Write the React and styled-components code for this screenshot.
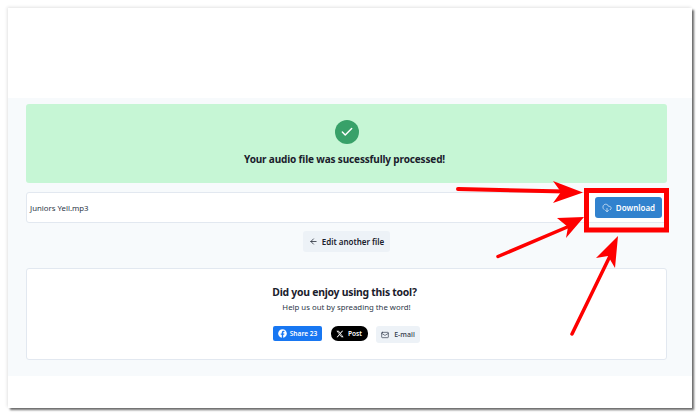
import React from 'react'
import styled, {createGlobalStyle} from 'styled-components'
import {ArrowLeft, CloudDownload, Mail, Check} from 'lucide-react'
import {FaFacebook} from 'react-icons/fa'
import {FaXTwitter} from 'react-icons/fa6'

const Global = createGlobalStyle`
  html, body {
    margin: 0;
    padding: 0;
    background: #fff;
  }
  body {
    font-family: "Noto Sans", "Liberation Sans", sans-serif;
    color: #1a202c;
    overflow: hidden;
  }
`

const Page = styled.div`
  position: relative;
  width: 700px;
  height: 418px;
  padding: 8px;
  box-sizing: border-box;
`

const Frame = styled.div`
  height: 400px;
  padding-top: 90px;
  box-sizing: border-box;
  background: #fff;
  box-shadow: 2px 2px 2px #6b6b6b, -1px -1px 3px #e4e4e4;
`

const Section = styled.section`
  height: 278px;
  box-sizing: border-box;
  padding: 6px 25px 0 18px;
  background: #f7fafc;
  display: flex;
  flex-direction: column;
`

const Banner = styled.div`
  height: 79px;
  box-sizing: border-box;
  padding-top: 16px;
  background: #c6f6d5;
  border-radius: 3px;
  display: flex;
  flex-direction: column;
  align-items: center;
`

const CheckCircle = styled.div`
  width: 24px;
  height: 24px;
  border-radius: 50%;
  background: #38a169;
  color: #fff;
  display: flex;
  align-items: center;
  justify-content: center;
`

const BannerText = styled.div`
  margin: 8px 4px 0 0;
  font-size: 10px;
  line-height: 14px;
  font-weight: 700;
  letter-spacing: -0.15px;
`

const FileRow = styled.div`
  margin-top: 9px;
  height: 31px;
  box-sizing: border-box;
  padding: 0 4px 0 3px;
  background: #fff;
  border: 1px solid #e2e8f0;
  border-radius: 3px;
  display: flex;
  align-items: center;
  justify-content: space-between;
`

const FileName = styled.span`
  font-size: 7.8px;
  color: #2d3748;
`

const DownloadButton = styled.button`
  width: 67px;
  height: 21px;
  padding: 0;
  border: 0;
  border-radius: 3px;
  background: #3182ce;
  color: #fff;
  font-family: inherit;
  font-size: 8px;
  font-weight: 600;
  display: flex;
  align-items: center;
  justify-content: center;
  gap: 4px;
`

const EditRow = styled.div`
  margin-top: 8px;
  display: flex;
  justify-content: center;
`

const EditButton = styled.button`
  width: 87px;
  height: 21px;
  padding: 0;
  border: 0;
  border-radius: 3px;
  background: #edf2f7;
  color: #1a202c;
  font-family: inherit;
  font-size: 8px;
  font-weight: 600;
  display: flex;
  align-items: center;
  justify-content: center;
  gap: 4px;
`

const Card = styled.div`
  margin-top: 16px;
  height: 92px;
  box-sizing: border-box;
  padding-top: 16px;
  background: #fff;
  border: 1px solid #e2e8f0;
  border-radius: 3px;
  display: flex;
  flex-direction: column;
  align-items: center;
`

const CardTitle = styled.div`
  margin-right: 4px;
  font-size: 10.4px;
  line-height: 14px;
  font-weight: 700;
  letter-spacing: -0.25px;
`

const CardText = styled.div`
  margin-top: 2px;
  font-size: 7.8px;
  line-height: 12px;
  color: #2d3748;
`

const Shares = styled.div`
  margin-top: 13px;
  display: flex;
  align-items: flex-start;
  gap: 8.5px;
`

const ShareButton = styled.a`
  height: ${p => p.$h || 15}px;
  width: ${p => p.$w}px;
  box-sizing: border-box;
  background: ${p => p.$bg};
  color: ${p => p.$fg};
  border-radius: ${p => p.$radius}px;
  font-size: ${p => p.$size || 6.6}px;
  font-weight: ${p => p.$weight || 600};
  display: flex;
  align-items: center;
  justify-content: center;
  gap: ${p => p.$gap || 3}px;
`

const Overlay = styled.svg`
  position: absolute;
  left: 0;
  top: 0;
  pointer-events: none;
`

function Arrows() {
  return (
    <Overlay width="700" height="418" viewBox="0 0 700 418">
      <rect x="586.5" y="190.5" width="80" height="39.5" fill="none" stroke="#fe0000" strokeWidth="5" />
      <path d="M458 189 L565 191.5" stroke="#fe0000" strokeWidth="4" strokeLinecap="round" />
      <path d="M583 192.5 L553 181 L561 192 L553 203 Z" fill="#fe0000" />
      <path d="M498 256.5 L572 225" stroke="#fe0000" strokeWidth="3.5" strokeLinecap="round" />
      <path d="M584 217 L557 218 L568 227 L566 238 Z" fill="#fe0000" />
      <path d="M572 334 L610 256" stroke="#fe0000" strokeWidth="3.5" strokeLinecap="round" />
      <path d="M618 236 L596 258 L608 256 L615 268 Z" fill="#fe0000" />
    </Overlay>
  )
}

export default function App() {
  return (
    <Page>
      <Global />
      <Frame>
        <Section>
          <Banner>
            <CheckCircle><Check size={14} strokeWidth={2.5} /></CheckCircle>
            <BannerText>Your audio file was sucessfully processed!</BannerText>
          </Banner>

          <FileRow>
            <FileName>Juniors Yell.mp3</FileName>
            <DownloadButton><CloudDownload size={10} strokeWidth={1.5} />Download</DownloadButton>
          </FileRow>

          <EditRow>
            <EditButton><ArrowLeft size={9} />Edit another file</EditButton>
          </EditRow>

          <Card>
            <CardTitle>Did you enjoy using this tool?</CardTitle>
            <CardText>Help us out by spreading the word!</CardText>
            <Shares>
              <ShareButton $w={49} $bg="#1877f2" $fg="#fff" $radius={2}><FaFacebook size={9} />Share 23</ShareButton>
              <ShareButton $w={37} $bg="#000" $fg="#fff" $radius={7} $gap={4}><FaXTwitter size={8} />Post</ShareButton>
              <ShareButton $w={44} $h={17} $bg="#edf2f7" $fg="#2d3748" $radius={3} $weight={500} $size={7} $gap={5}><Mail size={8} />E-mail</ShareButton>
            </Shares>
          </Card>
        </Section>
      </Frame>
      <Arrows />
    </Page>
  )
}
